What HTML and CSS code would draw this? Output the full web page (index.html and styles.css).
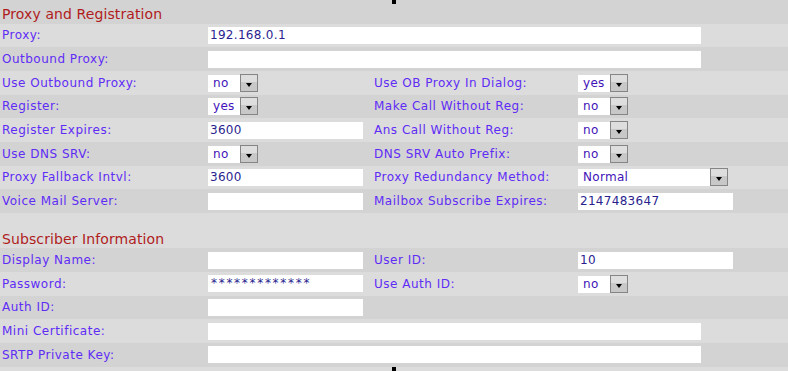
FILE: index.html
```html
<!DOCTYPE html>
<html lang="en">
<head>
    <meta charset="UTF-8">
    <title>Proxy and Registration</title>
    <link rel="stylesheet" href="styles.css">
</head>
<body>
    <div class="mark mark-top"></div>

    <div class="row dark title">Proxy and Registration</div>

    <div class="row light">
        <span class="lbl">Proxy:</span>
        <span class="txt wide">192.168.0.1</span>
    </div>
    <div class="row dark">
        <span class="lbl">Outbound Proxy:</span>
        <span class="txt wide"></span>
    </div>
    <div class="row light">
        <span class="lbl">Use Outbound Proxy:</span>
        <span class="sel"><span class="sel-val">no</span><span class="sel-btn"></span></span>
        <span class="lbl">Use OB Proxy In Dialog:</span>
        <span class="sel"><span class="sel-val">yes</span><span class="sel-btn"></span></span>
    </div>
    <div class="row dark">
        <span class="lbl">Register:</span>
        <span class="sel"><span class="sel-val">yes</span><span class="sel-btn"></span></span>
        <span class="lbl">Make Call Without Reg:</span>
        <span class="sel"><span class="sel-val">no</span><span class="sel-btn"></span></span>
    </div>
    <div class="row light">
        <span class="lbl">Register Expires:</span>
        <span class="txt">3600</span>
        <span class="lbl">Ans Call Without Reg:</span>
        <span class="sel"><span class="sel-val">no</span><span class="sel-btn"></span></span>
    </div>
    <div class="row dark">
        <span class="lbl">Use DNS SRV:</span>
        <span class="sel"><span class="sel-val">no</span><span class="sel-btn"></span></span>
        <span class="lbl">DNS SRV Auto Prefix:</span>
        <span class="sel"><span class="sel-val">no</span><span class="sel-btn"></span></span>
    </div>
    <div class="row light">
        <span class="lbl">Proxy Fallback Intvl:</span>
        <span class="txt">3600</span>
        <span class="lbl">Proxy Redundancy Method:</span>
        <span class="sel sel-long"><span class="sel-val">Normal</span><span class="sel-btn"></span></span>
    </div>
    <div class="row dark">
        <span class="lbl">Voice Mail Server:</span>
        <span class="txt"></span>
        <span class="lbl">Mailbox Subscribe Expires:</span>
        <span class="txt">2147483647</span>
    </div>

    <div class="spacer light"></div>
    <div class="row light title">Subscriber Information</div>

    <div class="row dark">
        <span class="lbl">Display Name:</span>
        <span class="txt"></span>
        <span class="lbl">User ID:</span>
        <span class="txt">10</span>
    </div>
    <div class="row light">
        <span class="lbl">Password:</span>
        <span class="txt pwd">*************</span>
        <span class="lbl">Use Auth ID:</span>
        <span class="sel"><span class="sel-val">no</span><span class="sel-btn"></span></span>
    </div>
    <div class="row dark">
        <span class="lbl">Auth ID:</span>
        <span class="txt"></span>
    </div>
    <div class="row light">
        <span class="lbl">Mini Certificate:</span>
        <span class="txt wide"></span>
    </div>
    <div class="row dark">
        <span class="lbl">SRTP Private Key:</span>
        <span class="txt wide"></span>
    </div>

    <div class="mark mark-bottom"></div>
</body>
</html>
```

FILE: styles.css
```css
body {
    font-family: 'DejaVu Sans', Verdana, sans-serif;
    font-size: 12px;
    background-color: #dcdcdc;
    margin: 0;
    padding: 0;
    height: 371px;
    overflow: hidden;
    position: relative;
}

.row {
    display: grid;
    grid-template-columns: 208px 164px 206px 1fr;
    align-items: center;
    height: 23.667px;
}

.dark {
    background-color: #d3d3d3;
}

.light {
    background-color: #dcdcdc;
}

.spacer {
    height: 11.667px;
}

.title {
    display: block;
    font-size: 14px;
    line-height: 18px;
    padding: 5px 0 0 2px;
    box-sizing: border-box;
    color: #b01c1c;
    letter-spacing: 0.1px;
}

.lbl {
    color: #5f2cf5;
    padding-left: 2px;
    letter-spacing: 0.5px;
    white-space: nowrap;
}

.txt {
    display: block;
    background-color: #fff;
    height: 17px;
    line-height: 17px;
    width: 155px;
    padding-left: 2px;
    box-sizing: border-box;
    color: #2b1f8f;
    letter-spacing: 0.3px;
    white-space: nowrap;
}

.txt.wide {
    grid-column: 2 / 5;
    width: 493px;
}

.txt.pwd {
    letter-spacing: 1.7px;
    padding-left: 3px;
}

.sel {
    display: flex;
    width: 50px;
    height: 18px;
}

.sel-long {
    width: 150px;
}

.sel-val {
    flex: 1;
    background-color: #fff;
    height: 17px;
    margin-top: 1px;
    line-height: 17px;
    padding-left: 5px;
    color: #4212b8;
    letter-spacing: 0.3px;
}

.sel-btn {
    width: 16px;
    height: 12px;
    border: 1px solid #858585;
    background: linear-gradient(#dedede 45%, #c8c8c8 45%);
    display: flex;
    justify-content: center;
    align-items: flex-end;
    padding-bottom: 4px;
}

.sel-btn::after {
    content: '';
    border-left: 3.5px solid transparent;
    border-right: 3.5px solid transparent;
    border-top: 4px solid #000;
}

.mark {
    position: absolute;
    left: 392px;
    width: 4px;
    background-color: #000;
}

.mark-top {
    top: 0;
    height: 4px;
}

.mark-bottom {
    top: 367px;
    height: 4px;
}
```
